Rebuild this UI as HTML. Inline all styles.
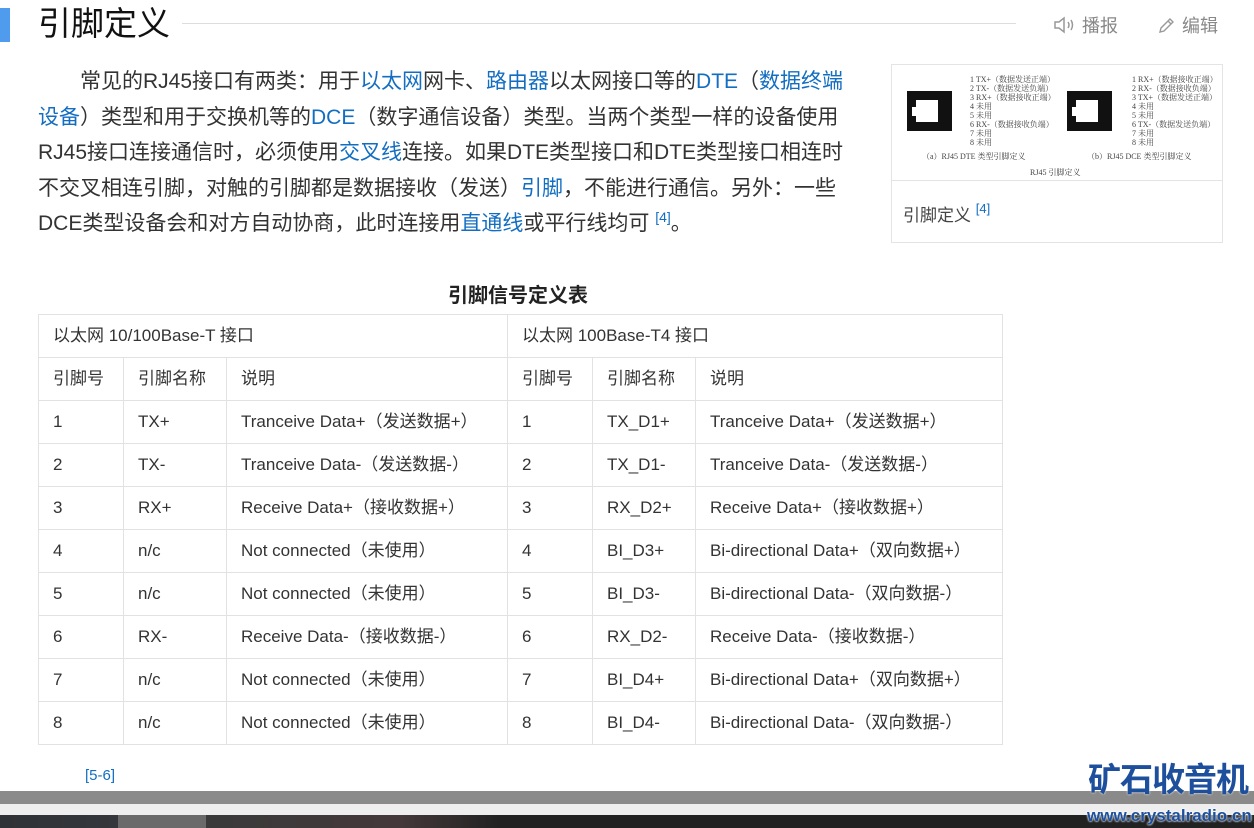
<!DOCTYPE html>
<html><head><meta charset="utf-8"><style>
*{margin:0;padding:0;box-sizing:border-box}
body{width:1254px;height:828px;overflow:hidden;background:#fff;font-family:"Liberation Sans","Noto Sans CJK SC",sans-serif;color:#333;position:relative}
.bar{position:absolute;left:0;top:8px;width:10px;height:34px;background:#4f9cee}
.title{position:absolute;left:38px;top:2px;font-size:33px;color:#111;line-height:44px}
.hline{position:absolute;left:182px;top:23px;width:834px;height:1px;background:#ddd}
.act{position:absolute;top:12px;font-size:18px;color:#888}
.para{position:absolute;left:38px;top:64px;font-size:21px;line-height:35.5px;color:#333;white-space:nowrap}
.para div{height:35.5px}
.para a{color:#136ec2;text-decoration:none}
sup{font-size:14px;color:#136ec2;vertical-align:8px;line-height:0}
.fig{position:absolute;left:891px;top:64px;width:332px;height:179px;border:1px solid #e4e4e4}
.cap{position:absolute;left:448px;top:279px;font-size:20px;font-weight:bold;color:#222}
table{position:absolute;left:38px;top:314px;border-collapse:collapse;font-size:17px;color:#333}
td{border:1px solid #e2e2e2;height:43px;padding:0 0 0 14px;white-space:nowrap;line-height:20px;vertical-align:middle}
td span{display:inline-block;line-height:20px;height:20px}
</style></head><body>
<div class="bar"></div>
<div class="title">引脚定义</div>
<div class="hline"></div>
<div class="act" style="left:1053px">
<svg width="24" height="20" viewBox="0 0 24 20" style="vertical-align:-3px"><path d="M2 7h4l5-4v14l-5-4H2z" fill="none" stroke="#999" stroke-width="1.5"/><path d="M15 7q2 3 0 6M18 5q3 5 0 10" fill="none" stroke="#999" stroke-width="1.5"/></svg> 播报</div>
<div class="act" style="left:1157px">
<svg width="20" height="20" viewBox="0 0 20 20" style="vertical-align:-3px"><path d="M3 17l1-4 9-9 3 3-9 9z M11 6l3 3" fill="none" stroke="#999" stroke-width="1.4"/></svg> 编辑</div>
<div class="para">
<div>　　常见的RJ45接口有两类：用于<a>以太网</a>网卡、<a>路由器</a>以太网接口等的<a>DTE</a>（<a>数据终端</a></div>
<div><a>设备</a>）类型和用于交换机等的<a>DCE</a>（数字通信设备）类型。当两个类型一样的设备使用</div>
<div>RJ45接口连接通信时，必须使用<a>交叉线</a>连接。如果DTE类型接口和DTE类型接口相连时</div>
<div>不交叉相连引脚，对触的引脚都是数据接收（发送）<a>引脚</a>，不能进行通信。另外：一些</div>
<div>DCE类型设备会和对方自动协商，此时连接用<a>直通线</a>或平行线均可 <sup>[4]</sup>。</div>
</div>
<div class="fig">
<svg width="330" height="115" viewBox="0 0 330 115" style="display:block;font-family:'Liberation Serif','Noto Serif CJK SC',serif">
<rect x="15" y="26" width="45" height="40" fill="#111"/><rect x="24" y="35" width="22" height="22" fill="#fff"/><rect x="20" y="42" width="6" height="9" fill="#fff"/>
<rect x="175" y="26" width="45" height="40" fill="#111"/><rect x="184" y="35" width="22" height="22" fill="#fff"/><rect x="180" y="42" width="6" height="9" fill="#fff"/>
<g font-size="8" fill="#444"><text x="78" y="17">1 TX+（数据发送正端）</text><text x="78" y="26">2 TX-（数据发送负端）</text><text x="78" y="35">3 RX+（数据接收正端）</text><text x="78" y="44">4 未用</text><text x="78" y="53">5 未用</text><text x="78" y="62">6 RX-（数据接收负端）</text><text x="78" y="71">7 未用</text><text x="78" y="80">8 未用</text>
<text x="240" y="17">1 RX+（数据接收正端）</text><text x="240" y="26">2 RX-（数据接收负端）</text><text x="240" y="35">3 TX+（数据发送正端）</text><text x="240" y="44">4 未用</text><text x="240" y="53">5 未用</text><text x="240" y="62">6 TX-（数据发送负端）</text><text x="240" y="71">7 未用</text><text x="240" y="80">8 未用</text>
<text x="30" y="94">（a）RJ45 DTE 类型引脚定义</text><text x="195" y="94">（b）RJ45 DCE 类型引脚定义</text><text x="138" y="110">RJ45 引脚定义</text></g>
</svg>
<div style="border-top:1px solid #e4e4e4;height:63px;padding:20px 0 0 11px;font-size:17px;color:#444">引脚定义 <sup style="font-size:13px">[4]</sup></div>
</div>
<div class="cap">引脚信号定义表</div>
<table>
<tr><td colspan="3" style="width:469px"><span>以太网 10/100Base-T 接口</span></td><td colspan="3" style="width:495px"><span>以太网 100Base-T4 接口</span></td></tr>
<tr><td style="width:85px"><span>引脚号</span></td><td style="width:103px"><span>引脚名称</span></td><td style="width:281px"><span>说明</span></td><td style="width:85px"><span>引脚号</span></td><td style="width:103px"><span>引脚名称</span></td><td style="width:307px"><span>说明</span></td></tr>
<tr><td><span>1</span></td><td><span>TX+</span></td><td><span>Tranceive Data+（发送数据+）</span></td><td><span>1</span></td><td><span>TX_D1+</span></td><td><span>Tranceive Data+（发送数据+）</span></td></tr>
<tr><td><span>2</span></td><td><span>TX-</span></td><td><span>Tranceive Data-（发送数据-）</span></td><td><span>2</span></td><td><span>TX_D1-</span></td><td><span>Tranceive Data-（发送数据-）</span></td></tr>
<tr><td><span>3</span></td><td><span>RX+</span></td><td><span>Receive Data+（接收数据+）</span></td><td><span>3</span></td><td><span>RX_D2+</span></td><td><span>Receive Data+（接收数据+）</span></td></tr>
<tr><td><span>4</span></td><td><span>n/c</span></td><td><span>Not connected（未使用）</span></td><td><span>4</span></td><td><span>BI_D3+</span></td><td><span>Bi-directional Data+（双向数据+）</span></td></tr>
<tr><td><span>5</span></td><td><span>n/c</span></td><td><span>Not connected（未使用）</span></td><td><span>5</span></td><td><span>BI_D3-</span></td><td><span>Bi-directional Data-（双向数据-）</span></td></tr>
<tr><td><span>6</span></td><td><span>RX-</span></td><td><span>Receive Data-（接收数据-）</span></td><td><span>6</span></td><td><span>RX_D2-</span></td><td><span>Receive Data-（接收数据-）</span></td></tr>
<tr><td><span>7</span></td><td><span>n/c</span></td><td><span>Not connected（未使用）</span></td><td><span>7</span></td><td><span>BI_D4+</span></td><td><span>Bi-directional Data+（双向数据+）</span></td></tr>
<tr><td><span>8</span></td><td><span>n/c</span></td><td><span>Not connected（未使用）</span></td><td><span>8</span></td><td><span>BI_D4-</span></td><td><span>Bi-directional Data-（双向数据-）</span></td></tr>
</table>
<div style="position:absolute;left:85px;top:767px;font-size:15px;color:#136ec2">[5-6]</div>
<div style="position:absolute;left:0;top:791px;width:1254px;height:13px;background:#8a8a8a"></div>
<div style="position:absolute;left:0;top:804px;width:1254px;height:11px;background:#eee"></div>
<div style="position:absolute;left:0;top:815px;width:1254px;height:13px;background:linear-gradient(90deg,#2f3236 0,#34373b 118px,#6a6a6a 118px,#6a6a6a 206px,#3a3a3a 206px,#44383a 400px,#222 500px,#222)"></div>
<div style="position:absolute;left:1088px;top:762px;font-size:33px;font-weight:bold;color:#1d4f9c;letter-spacing:-1px;line-height:36px;text-shadow:0 0 2px #fff">矿石收音机</div>
<div style="position:absolute;left:1087px;top:806px;font-size:17px;font-weight:bold;color:#1d4f9c;line-height:20px;text-shadow:0 0 2px #fff,0 0 2px #fff">www.crystalradio.cn</div>
</body></html>
